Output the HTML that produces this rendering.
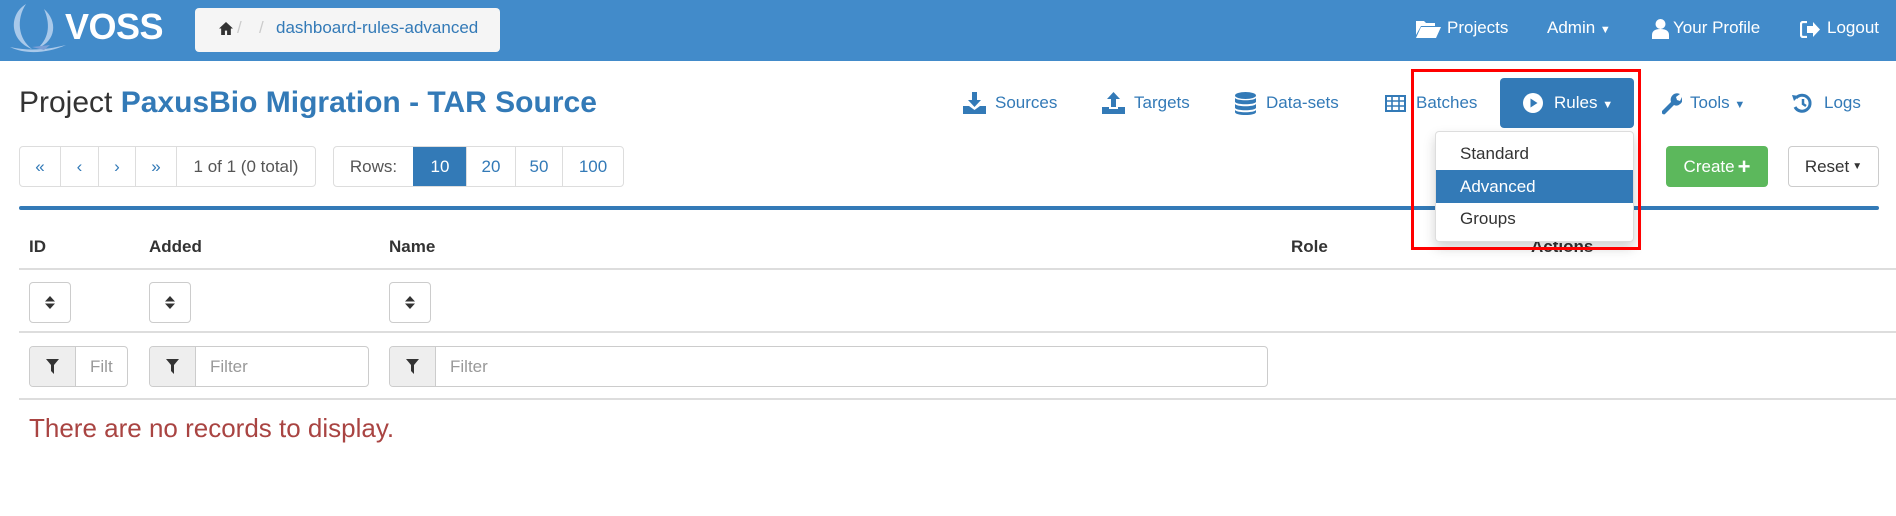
<!DOCTYPE html>
<html><head><meta charset="utf-8"><style>
*{box-sizing:border-box;margin:0;padding:0}
body{width:1896px;height:516px;background:#fff;font-family:"Liberation Sans",Arial,sans-serif;font-size:17px;color:#333;position:relative;overflow:hidden}
.a{position:absolute}
.hdr{left:0;top:0;width:1896px;height:61px;background:#428bca}
.nav{color:#fff;font-size:17px;top:18px}
.blue{color:#337ab7}
.pg{border:1px solid #ddd;border-radius:4px;display:flex;height:41px;top:146px;overflow:hidden}
.pg div{border-left:1px solid #ddd;display:flex;align-items:center;justify-content:center;color:#337ab7}
.pg div:first-child{border-left:none}
.th{top:237px;font-weight:bold;font-size:17px}
.hl{left:19px;width:1877px;height:2px;background:#ddd}
.sb{top:282px;width:42px;height:41px;border:1px solid #ccc;border-radius:4px;display:flex;align-items:center;justify-content:center}
.fi{top:346px;height:41px;border:1px solid #ccc;border-radius:4px;display:flex;overflow:hidden}
.fi .ad{width:46px;background:#eee;border-right:1px solid #ccc;display:flex;align-items:center;justify-content:center}
.fi .tx{padding-left:14px;color:#999;display:flex;align-items:center;font-size:17px}
</style></head><body>
<div class="a hdr"></div>
<svg class="a" style="left:8px;top:3px" width="58" height="52" viewBox="0 0 58 52">
<path d="M18 1 C0 12 2 38 24 46 C10 36 8 16 18 1Z" fill="#a9c9ea"/>
<path d="M36 6 C50 18 48 38 30 45 C42 34 42 20 36 6Z" fill="#a9c9ea"/>
<path d="M2 44 C18 52 40 50 58 42 C38 47 20 48 2 44Z" fill="#a9c9ea"/>
<path d="M24 44 L42 42 L36 47 Z" fill="#7c9fd6"/>
</svg>
<div class="a" style="left:65px;top:6px;color:#fff;font-size:36px;font-weight:bold;letter-spacing:-0.5px">VOSS</div>
<div class="a" style="left:195px;top:8px;width:305px;height:44px;background:#f5f5f5;border-radius:4px"></div>
<svg class="a" style="left:219px;top:22px" width="14" height="13" viewBox="0 0 13 12"><path d="M6.5 0L0 6h2v6h3.5V8h2v4H11V6h2z" fill="#333"/></svg>
<div class="a" style="left:237px;top:18px;color:#ccc">/</div>
<div class="a" style="left:259px;top:18px;color:#ccc">/</div>
<div class="a" style="left:276px;top:18px;color:#337ab7;font-size:17px">dashboard-rules-advanced</div>

<svg class="a" style="left:1416px;top:19px" width="25" height="19" viewBox="0 0 25 19"><path d="M0 2h8l2 2h9v3H5L0 16z M5 8h20l-5 11H0z" fill="#fff"/></svg>
<div class="a nav" style="left:1447px">Projects</div>
<div class="a nav" style="left:1547px">Admin <span style="font-size:11px">▼</span></div>
<svg class="a" style="left:1652px;top:19px" width="17" height="20" viewBox="0 0 17 20"><circle cx="8.5" cy="5" r="5" fill="#fff"/><path d="M0 20v-4c0-4 3-6 8.5-6s8.5 2 8.5 6v4z" fill="#fff"/></svg>
<div class="a nav" style="left:1673px">Your Profile</div>
<svg class="a" style="left:1800px;top:21px" width="20" height="17" viewBox="0 0 20 17"><path d="M7 1H3a2 2 0 0 0-2 2v11a2 2 0 0 0 2 2h4" stroke="#fff" stroke-width="2.2" fill="none"/><path d="M7 5h6V1l7 7.5-7 7.5v-4H7z" fill="#fff"/></svg>
<div class="a nav" style="left:1827px">Logout</div>

<div class="a" style="left:19px;top:86px;font-size:30px">Project <span style="color:#337ab7;font-weight:bold">PaxusBio Migration - TAR Source</span></div>

<svg class="a" style="left:963px;top:92px" width="23" height="22" viewBox="0 0 23 22"><path d="M9 0h5v8h4l-6.5 7L5 8h4z" fill="#337ab7"/><path d="M0 14h6l5.5 4 5.5-4h6v8H0z" fill="#337ab7"/></svg>
<div class="a blue" style="left:995px;top:93px">Sources</div>
<svg class="a" style="left:1102px;top:92px" width="23" height="22" viewBox="0 0 23 22"><path d="M9 15h5V7h4L11.5 0 5 7h4z" fill="#337ab7"/><path d="M0 15h7v2h9v-2h7v7H0z" fill="#337ab7"/></svg>
<div class="a blue" style="left:1134px;top:93px">Targets</div>
<svg class="a" style="left:1235px;top:92px" width="21" height="23" viewBox="0 0 21 23"><ellipse cx="10.5" cy="3.5" rx="10.5" ry="3.5" fill="#337ab7"/><path d="M0 6c2 3 19 3 21 0v4c-2 3-19 3-21 0z M0 12c2 3 19 3 21 0v4c-2 3-19 3-21 0z M0 18c2 3 19 3 21 0v2c0 2-5 3-10.5 3S0 22 0 20z" fill="#337ab7"/></svg>
<div class="a blue" style="left:1266px;top:93px">Data-sets</div>
<svg class="a" style="left:1385px;top:95px" width="21" height="17" viewBox="0 0 21 17"><rect x="1" y="1" width="19" height="15" fill="none" stroke="#337ab7" stroke-width="2"/><path d="M1 6h19M1 11h19M7 1v15M14 1v15" stroke="#337ab7" stroke-width="1.6"/></svg>
<div class="a blue" style="left:1416px;top:93px">Batches</div>

<div class="a" style="left:1500px;top:78px;width:134px;height:50px;background:#337ab7;border-radius:4px"></div>
<svg class="a" style="left:1523px;top:93px" width="20" height="20" viewBox="0 0 20 20"><circle cx="10" cy="10" r="10" fill="#fff"/><path d="M7.5 5.5L14.5 10 7.5 14.5z" fill="#337ab7"/></svg>
<div class="a" style="left:1554px;top:93px;color:#fff">Rules <span style="font-size:11px">▼</span></div>

<svg class="a" style="left:1660px;top:92px" width="22" height="23" viewBox="0 0 22 23"><path d="M2 19l9-9c-1-3 0-6 3-8 2-1 4-1 6 0l-4 3 1 3 3 1 2-4c1 3 0 6-2 7-2 2-4 2-6 1l-9 9c-1 1-3 0-3-1z" fill="#337ab7"/></svg>
<div class="a blue" style="left:1690px;top:93px">Tools <span style="font-size:11px">▼</span></div>
<svg class="a" style="left:1792px;top:93px" width="21" height="21" viewBox="0 0 21 21"><path d="M4 5A8 8 0 1 1 3 14" stroke="#337ab7" stroke-width="3" fill="none"/><path d="M0 2l7 1-5 5z" fill="#337ab7"/><path d="M11 6v5l3 2" stroke="#337ab7" stroke-width="2.5" fill="none"/></svg>
<div class="a blue" style="left:1824px;top:93px">Logs</div>

<div class="a pg" style="left:19px;width:297px">
<div style="width:40px">«</div><div style="width:38px">‹</div><div style="width:37px">›</div><div style="width:41px">»</div><div style="flex:1;color:#555">1 of 1 (0 total)</div></div>
<div class="a pg" style="left:333px;width:291px">
<div style="width:79px;color:#555">Rows:</div><div style="width:53px;background:#337ab7;color:#fff;border-color:#337ab7">10</div><div style="width:49px">20</div><div style="width:47px">50</div><div style="flex:1">100</div></div>

<div class="a" style="left:1666px;top:146px;width:102px;height:41px;background:#5cb85c;border-radius:4px;color:#fff;display:flex;align-items:center;justify-content:center">Create <b style="font-size:22px;margin-left:3px">+</b></div>
<div class="a" style="left:1788px;top:146px;width:91px;height:41px;border:1px solid #ccc;border-radius:4px;display:flex;align-items:center;justify-content:center">Reset <span style="font-size:10px;margin-left:3px">▼</span></div>

<div class="a" style="left:19px;top:206px;width:1860px;height:4px;background:#337ab7;border-radius:2px"></div>
<div class="a th" style="left:29px">ID</div>
<div class="a th" style="left:149px">Added</div>
<div class="a th" style="left:389px">Name</div>
<div class="a th" style="left:1291px">Role</div>
<div class="a th" style="left:1531px">Actions</div>
<div class="a hl" style="top:268px"></div>
<div class="a sb" style="left:29px"><svg width="10" height="13" viewBox="0 0 10 13"><path d="M5 0L10 5.5H0zM0 7.5h10L5 13z" fill="#333"/></svg></div>
<div class="a sb" style="left:149px"><svg width="10" height="13" viewBox="0 0 10 13"><path d="M5 0L10 5.5H0zM0 7.5h10L5 13z" fill="#333"/></svg></div>
<div class="a sb" style="left:389px"><svg width="10" height="13" viewBox="0 0 10 13"><path d="M5 0L10 5.5H0zM0 7.5h10L5 13z" fill="#333"/></svg></div>
<div class="a hl" style="top:331px"></div>
<div class="a fi" style="left:29px;width:99px"><div class="ad"><svg width="13" height="15" viewBox="0 0 13 15"><path d="M0 0h13L8 6v9L5 12V6z" fill="#333"/></svg></div><div class="tx">Filt</div></div>
<div class="a fi" style="left:149px;width:220px"><div class="ad"><svg width="13" height="15" viewBox="0 0 13 15"><path d="M0 0h13L8 6v9L5 12V6z" fill="#333"/></svg></div><div class="tx">Filter</div></div>
<div class="a fi" style="left:389px;width:879px"><div class="ad"><svg width="13" height="15" viewBox="0 0 13 15"><path d="M0 0h13L8 6v9L5 12V6z" fill="#333"/></svg></div><div class="tx">Filter</div></div>
<div class="a hl" style="top:398px"></div>
<div class="a" style="left:29px;top:413px;font-size:26px;color:#a94442">There are no records to display.</div>

<div class="a" style="left:1435px;top:131px;width:199px;height:111px;background:#fff;border:1px solid #ddd;border-radius:4px;box-shadow:0 6px 12px rgba(0,0,0,.18)"></div>
<div class="a" style="left:1460px;top:144px">Standard</div>
<div class="a" style="left:1436px;top:170px;width:197px;height:33px;background:#337ab7"></div>
<div class="a" style="left:1460px;top:177px;color:#fff">Advanced</div>
<div class="a" style="left:1460px;top:209px">Groups</div>
<div class="a" style="left:1411px;top:69px;width:230px;height:181px;border:3px solid #f00"></div>
</body></html>
